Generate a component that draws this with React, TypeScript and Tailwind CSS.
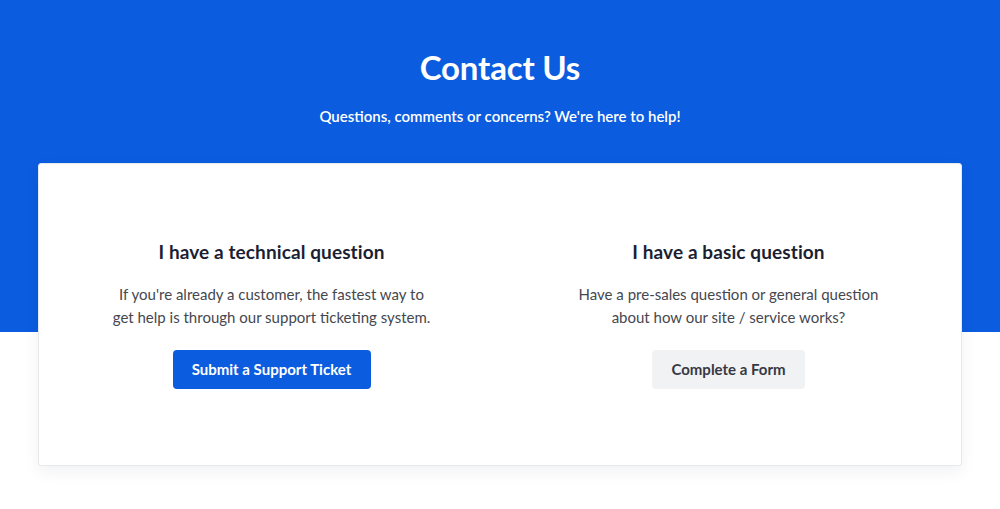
export default function App() {
  return (
    <div className="min-h-[509px] w-full bg-white font-['Lato',sans-serif]">
      {/* blue hero */}
      <div className="h-[332px] w-full bg-[#0b5cdf]">
        <div className="flex flex-col items-center pt-[44px] text-white">
          <h1 className="text-[33px] font-bold leading-[46px] tracking-[-0.2px]">Contact Us</h1>
          <p className="mt-[16px] text-[15px] font-semibold leading-[20px]">
            Questions, comments or concerns? We're here to help!
          </p>
        </div>
      </div>

      {/* card */}
      <div className="mx-[38px] mt-[-169px] h-[303px] rounded-[3px] border border-[#e6e8ec] bg-white shadow-[0_6px_16px_rgba(20,30,60,0.06)]">
        <div className="grid h-full grid-cols-2 pt-[75px]">
          <div className="flex flex-col items-center pl-[4px]">
            <h2 className="text-[19px] font-bold leading-[26px] tracking-[0.1px] text-[#1c1f33]">I have a technical question</h2>
            <p className="mt-[18px] text-center text-[15px] leading-[23px] text-[#45474f]">
              If you're already a customer, the fastest way to
              <br />
              get help is through our support ticketing system.
            </p>
            <button className="mt-[21px] h-[39px] w-[198px] rounded-[4px] bg-[#0b5cdf] text-[15px] font-bold text-white">
              Submit a Support Ticket
            </button>
          </div>
          <div className="flex flex-col items-center pr-[4px]">
            <h2 className="text-[19px] font-bold leading-[26px] tracking-[0.1px] text-[#1c1f33]">I have a basic question</h2>
            <p className="mt-[18px] text-center text-[15px] leading-[23px] text-[#45474f]">
              Have a pre-sales question or general question
              <br />
              about how our site / service works?
            </p>
            <button className="mt-[21px] h-[39px] w-[153px] rounded-[4px] bg-[#f1f2f4] text-[15px] font-bold text-[#363944]">
              Complete a Form
            </button>
          </div>
        </div>
      </div>
    </div>
  );
}
